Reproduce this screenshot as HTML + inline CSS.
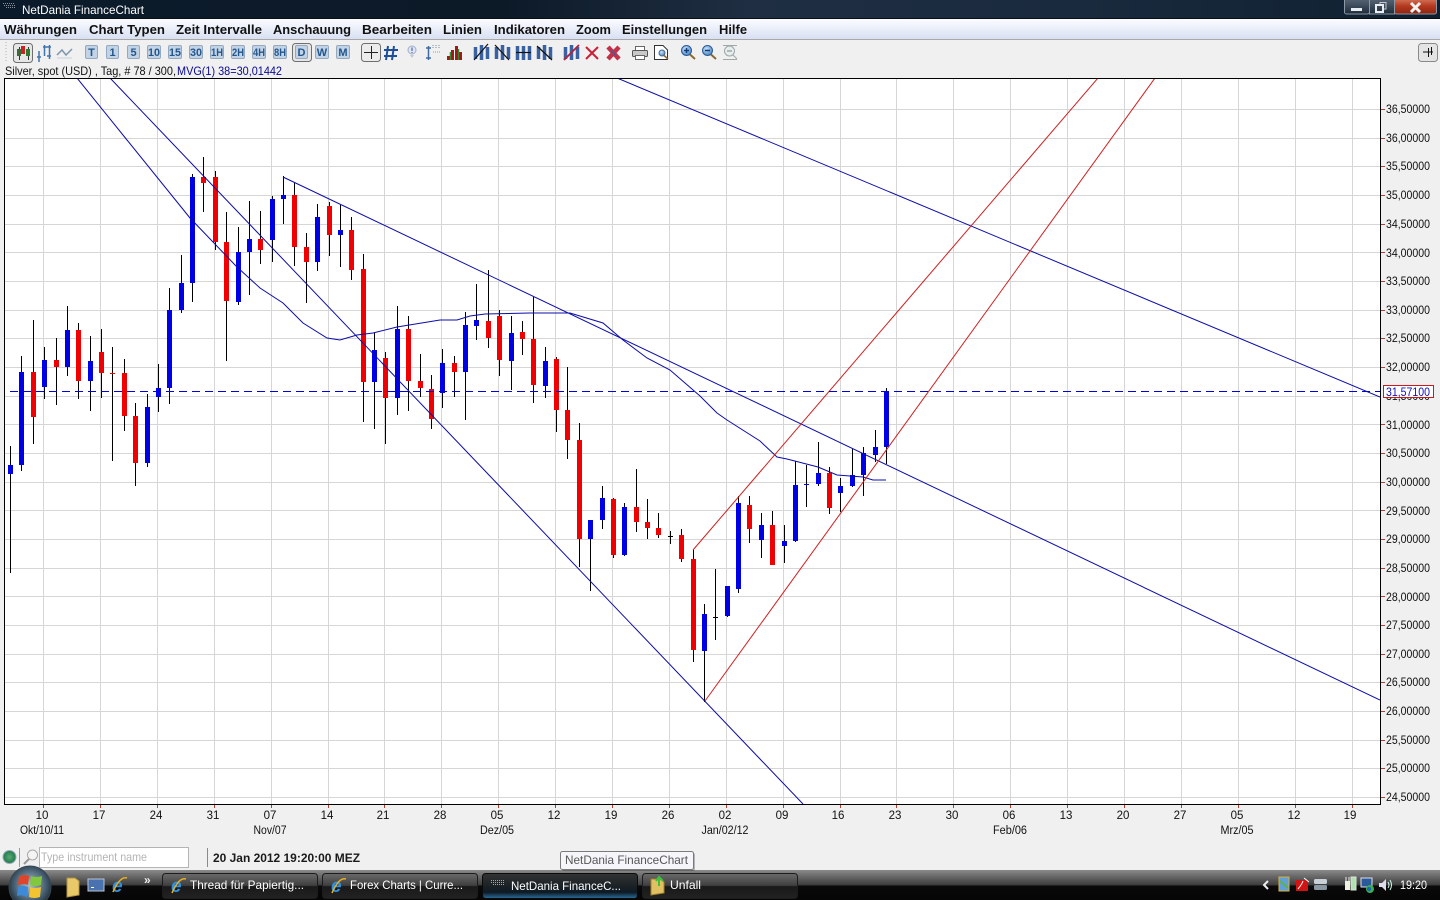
<!DOCTYPE html>
<html lang="de">
<head>
<meta charset="utf-8">
<title>NetDania FinanceChart</title>
<style>
html,body{margin:0;padding:0;width:1440px;height:900px;overflow:hidden;background:#f0f0f0}
svg{display:block;font-family:"Liberation Sans",Arial,sans-serif}
.m{font-size:13px;font-weight:bold;fill:#111}
.y{font-size:12px;fill:#111}
.x{font-size:11.500px;fill:#111;text-anchor:middle}
.b{fill:#c2d3e6;stroke:#94a9c0;stroke-width:1}
.l{font-size:11px;font-weight:bold;fill:#24568c;text-anchor:middle}
.t{font-size:12px;fill:#fff}
.tb{fill:url(#btn);stroke:#1c1c1c;stroke-width:1}
</style>
</head>
<body>
<svg width="1440" height="900" viewBox="0 0 1440 900" xmlns="http://www.w3.org/2000/svg">
<defs>
<linearGradient id="title" x1="0" x2="1" y1="0" y2="0">
<stop offset="0" stop-color="#0b1b2b"/><stop offset=".35" stop-color="#0c1a28"/><stop offset=".52" stop-color="#1f2e42"/><stop offset=".75" stop-color="#1a2a3e"/><stop offset="1" stop-color="#0e2030"/>
</linearGradient>
<linearGradient id="menu" x1="0" x2="0" y1="0" y2="1">
<stop offset="0" stop-color="#fbfcff"/><stop offset="1" stop-color="#d8e0f3"/>
</linearGradient>
<linearGradient id="task" x1="0" x2="0" y1="0" y2="1">
<stop offset="0" stop-color="#8a8a8a"/><stop offset=".5" stop-color="#3c3c3c"/><stop offset=".53" stop-color="#0a0a0a"/><stop offset="1" stop-color="#050505"/>
</linearGradient>
<linearGradient id="btn" x1="0" x2="0" y1="0" y2="1">
<stop offset="0" stop-color="#6a6a6a"/><stop offset=".48" stop-color="#3f3f3f"/><stop offset=".52" stop-color="#191919"/><stop offset="1" stop-color="#222"/>
</linearGradient>
<linearGradient id="act" x1="0" x2="0" y1="0" y2="1">
<stop offset="0" stop-color="#333"/><stop offset=".5" stop-color="#1b2226"/><stop offset=".75" stop-color="#0d1a24"/><stop offset="1" stop-color="#2b6e9c"/>
</linearGradient>
<linearGradient id="wb" x1="0" x2="0" y1="0" y2="1">
<stop offset="0" stop-color="#5a6878"/><stop offset="1" stop-color="#1e2c3a"/>
</linearGradient>
<linearGradient id="wc" x1="0" x2="0" y1="0" y2="1">
<stop offset="0" stop-color="#d87a60"/><stop offset=".5" stop-color="#b53a20"/><stop offset="1" stop-color="#8c2410"/>
</linearGradient>
<radialGradient id="orb" cx=".5" cy=".45" r=".6">
<stop offset="0" stop-color="#a9bfce"/><stop offset=".7" stop-color="#3c5566"/><stop offset="1" stop-color="#141e26"/>
</radialGradient>
<radialGradient id="grn" cx=".5" cy=".5" r=".5">
<stop offset="0" stop-color="#5aa878"/><stop offset="1" stop-color="#1f7a48"/>
</radialGradient>
<radialGradient id="lens" cx=".4" cy=".35" r=".7">
<stop offset="0" stop-color="#cfe4f8"/><stop offset="1" stop-color="#3f7fc0"/>
</radialGradient>
<clipPath id="cc"><rect x="5" y="79" width="1375" height="725"/></clipPath>
</defs>

<!-- title bar -->
<rect x="0" y="0" width="1440" height="18" fill="url(#title)"/>
<rect x="0" y="18" width="1440" height="1" fill="#0a0f14"/>
<path d="M3 3.500H15M4 5.500H15M6 7.500H15" stroke="#8a95a0" stroke-width="1" stroke-dasharray="1 1" fill="none"/>
<text x="22" y="14" class="t" textLength="122" lengthAdjust="spacingAndGlyphs">NetDania FinanceChart</text>
<rect x="1344.500" y="-2" width="25" height="16" rx="2" fill="url(#wb)" stroke="#8d98a4"/>
<rect x="1369.500" y="-2" width="25" height="16" fill="url(#wb)" stroke="#8d98a4"/>
<rect x="1394.500" y="-2" width="42" height="16" rx="2" fill="url(#wc)" stroke="#8d98a4"/>
<rect x="1351" y="8" width="11" height="3" fill="#e8edf2"/>
<rect x="1376" y="5" width="7" height="7" fill="none" stroke="#e8edf2" stroke-width="2"/>
<path d="M1380 4V2.500H1386V9H1384" fill="none" stroke="#c0c8d0" stroke-width="1"/>
<path d="M1411 3L1420 12M1420 3L1411 12" stroke="#f2f2f2" stroke-width="3"/>

<!-- menu bar -->
<rect x="0" y="19" width="1440" height="20" fill="url(#menu)"/>
<rect x="0" y="39" width="1440" height="1" fill="#a8a8a8"/>
<text x="4" y="34" class="m" textLength="73" lengthAdjust="spacingAndGlyphs">Währungen</text>
<text x="89" y="34" class="m" textLength="76" lengthAdjust="spacingAndGlyphs">Chart Typen</text>
<text x="176" y="34" class="m" textLength="86" lengthAdjust="spacingAndGlyphs">Zeit Intervalle</text>
<text x="273" y="34" class="m" textLength="78" lengthAdjust="spacingAndGlyphs">Anschauung</text>
<text x="362" y="34" class="m" textLength="70" lengthAdjust="spacingAndGlyphs">Bearbeiten</text>
<text x="443" y="34" class="m" textLength="39" lengthAdjust="spacingAndGlyphs">Linien</text>
<text x="494" y="34" class="m" textLength="71" lengthAdjust="spacingAndGlyphs">Indikatoren</text>
<text x="576" y="34" class="m" textLength="35" lengthAdjust="spacingAndGlyphs">Zoom</text>
<text x="622" y="34" class="m" textLength="85" lengthAdjust="spacingAndGlyphs">Einstellungen</text>
<text x="719" y="34" class="m" textLength="28" lengthAdjust="spacingAndGlyphs">Hilfe</text>

<!-- toolbar -->
<path d="M6 42V62" stroke="#b0b0b0" stroke-dasharray="1 2" fill="none"/>
<rect x="13.500" y="43.500" width="19" height="19" rx="3" fill="#e6e6e6" stroke="#6f6f6f"/>
<path d="M19.500 47V60M28.500 47V60" stroke="#333"/>
<rect x="17" y="49" width="4" height="7" fill="#3a6a3a"/><rect x="21" y="46" width="4" height="8" fill="#c22"/><rect x="26" y="49" width="4" height="7" fill="#2c7a2c"/>
<path d="M37 57H41M39 51V62M43 47H51M44.500 45V56M49.500 45V59M51 56H47" stroke="#3f74ae" stroke-width="1.500" fill="none"/>
<path d="M57 55L62 50L66 55L72 49" stroke="#7c96b0" stroke-width="1.500" fill="none"/>
<path d="M57 58H72" stroke="#c8d2dc"/>

<g>
<rect class="b" x="85.500" y="45.500" width="12" height="13" rx="1.500"/><text class="l" x="91.500" y="56">T</text>
<rect class="b" x="106.500" y="45.500" width="12" height="13" rx="1.500"/><text class="l" x="112.500" y="56">1</text>
<rect class="b" x="127.500" y="45.500" width="12" height="13" rx="1.500"/><text class="l" x="133.500" y="56">5</text>
<rect class="b" x="147.500" y="45.500" width="13" height="13" rx="1.500"/><text class="l" x="154" y="56" textLength="12" lengthAdjust="spacingAndGlyphs">10</text>
<rect class="b" x="168.500" y="45.500" width="13" height="13" rx="1.500"/><text class="l" x="175" y="56" textLength="12" lengthAdjust="spacingAndGlyphs">15</text>
<rect class="b" x="189.500" y="45.500" width="13" height="13" rx="1.500"/><text class="l" x="196" y="56" textLength="12" lengthAdjust="spacingAndGlyphs">30</text>
<rect class="b" x="210.500" y="45.500" width="13" height="13" rx="1.500"/><text class="l" x="217" y="56" textLength="12" lengthAdjust="spacingAndGlyphs">1H</text>
<rect class="b" x="231.500" y="45.500" width="13" height="13" rx="1.500"/><text class="l" x="238" y="56" textLength="12" lengthAdjust="spacingAndGlyphs">2H</text>
<rect class="b" x="252.500" y="45.500" width="13" height="13" rx="1.500"/><text class="l" x="259" y="56" textLength="12" lengthAdjust="spacingAndGlyphs">4H</text>
<rect class="b" x="273.500" y="45.500" width="13" height="13" rx="1.500"/><text class="l" x="280" y="56" textLength="12" lengthAdjust="spacingAndGlyphs">8H</text>
<rect x="292.500" y="43.500" width="19" height="18" rx="3" fill="#e6e6e6" stroke="#6f6f6f"/>
<rect class="b" x="295.500" y="45.500" width="12" height="13" rx="1.500"/><text class="l" x="301.500" y="56">D</text>
<rect class="b" x="315.500" y="45.500" width="13" height="13" rx="1.500"/><text class="l" x="322" y="56">W</text>
<rect class="b" x="336.500" y="45.500" width="13" height="13" rx="1.500"/><text class="l" x="343" y="56">M</text>
</g>

<rect x="361.500" y="43.500" width="19" height="18" rx="3" fill="#ececec" stroke="#6f6f6f"/>
<path d="M364 52.500H378M371.500 46V59" stroke="#222"/>
<path d="M388 46L386 60M394 46L392 60M384 50H398M384 56H397" stroke="#1d4f99" stroke-width="2" fill="none"/>
<circle cx="412" cy="50" r="4" fill="#dfe6f2" stroke="#a0aec8"/><path d="M412 47.500V51M412 52V53" stroke="#2f4fa0"/><path d="M410 55L412 58L414 55" fill="#c0c8d8"/>
<path d="M428.500 46V60M426 58H431M426 48H431" stroke="#3f6aa0" stroke-width="1.500" fill="none"/>
<path d="M433 45V49M436 45V49M439 45V49" stroke="#7a8a9a" stroke-dasharray="1 1"/><path d="M433 52H441" stroke="#8ea0b4" stroke-dasharray="1 1"/>
<path d="M448.500 56V60M452.500 50V60M456.500 46V60M460.500 52V60" stroke="#a01818" stroke-width="3" fill="none"/>
<path d="M450.500 52V60M458.500 49V60" stroke="#2f8a2f" stroke-width="1.500" fill="none"/>

<g fill="none">
<path d="M475.500 47V59M481.500 45V60M487.500 47V59" stroke="#3a62a0" stroke-width="3.500"/><path d="M474 60L488 44" stroke="#111" stroke-width="1.200"/>
<path d="M496.500 47V59M502.500 45V60M508.500 47V59" stroke="#3a62a0" stroke-width="3.500"/><path d="M495 45L509 60" stroke="#111" stroke-width="1.200"/>
<path d="M517.500 46V60M523.500 46V60M529.500 46V60" stroke="#3a62a0" stroke-width="3.500"/><path d="M516 52.500H531" stroke="#111" stroke-width="1.200"/>
<path d="M538.500 47V59M544.500 45V60M550.500 47V59" stroke="#3a62a0" stroke-width="3.500"/><path d="M537 46L552 60" stroke="#111" stroke-width="1.200"/>
<path d="M565.500 47V59M571.500 45V60M577.500 47V59" stroke="#3a62a0" stroke-width="3.500"/><path d="M564 60L579 45" stroke="#b02040" stroke-width="1.800"/>
<path d="M586 47L598 59M598 47L586 59" stroke="#cc2038" stroke-width="2"/>
<path d="M608 47L619 59M619 47L608 59" stroke="#c43048" stroke-width="4.500"/><path d="M611 50L616 56" stroke="#4060a0" stroke-width="1.500"/>
</g>

<rect x="635.500" y="46.500" width="9" height="4" fill="#fff" stroke="#666"/>
<rect x="632.500" y="50.500" width="15" height="6" rx="1" fill="#c8c8c8" stroke="#555"/>
<rect x="635.500" y="55.500" width="9" height="4" fill="#fff" stroke="#666"/>
<path d="M654.500 45.500H663L667.500 50V59.500H654.500Z" fill="#fff" stroke="#333"/>
<circle cx="662" cy="53" r="3" fill="url(#lens)" stroke="#4a6a90"/><path d="M664 55.500L668 59" stroke="#8a6a30" stroke-width="1.500"/>

<circle cx="686.500" cy="50.500" r="5" fill="url(#lens)" stroke="#2a5c9a"/><path d="M684 50.500H689M686.500 48V53" stroke="#123a78" stroke-width="1.500"/><path d="M690 54.500L695 59" stroke="#8a6a30" stroke-width="2"/>
<circle cx="707.500" cy="50.500" r="5" fill="url(#lens)" stroke="#2a5c9a"/><path d="M705 50.500H710" stroke="#123a78" stroke-width="1.500"/><path d="M711 54.500L716 59" stroke="#8a6a30" stroke-width="2"/>
<circle cx="729.500" cy="51" r="5" fill="#e8ecec" stroke="#9aa8a8"/><path d="M727 51H732" stroke="#9aa8a8" stroke-width="1.500"/><path d="M723 45.500H737M723 59.500H737M733 55L737 59" stroke="#a0a8a8"/>

<rect x="1418.500" y="43.500" width="19" height="18" rx="3" fill="#e4e4e4" stroke="#8a8a8a"/>
<path d="M1423 52H1433M1428.500 48V57M1431.500 47V55" stroke="#111"/>

<text x="5" y="75" font-size="12" fill="#111" textLength="171" lengthAdjust="spacingAndGlyphs">Silver, spot (USD) , Tag, # 78 / 300,</text>
<text x="177" y="75" font-size="12" fill="#0a0a90" textLength="105" lengthAdjust="spacingAndGlyphs">MVG(1) 38=30,01442</text>

<!-- chart -->
<rect x="4.500" y="78.500" width="1376" height="726" fill="#fff" stroke="#000"/>
<g clip-path="url(#cc)">
<path fill="none" stroke="#d6d6d6" d="M5 109.500H1380M5 138.500H1380M5 166.500H1380M5 195.500H1380M5 224.500H1380M5 252.500H1380M5 281.500H1380M5 310.500H1380M5 338.500H1380M5 367.500H1380M5 396.500H1380M5 424.500H1380M5 453.500H1380M5 482.500H1380M5 510.500H1380M5 539.500H1380M5 568.500H1380M5 596.500H1380M5 625.500H1380M5 654.500H1380M5 682.500H1380M5 711.500H1380M5 740.500H1380M5 768.500H1380M5 797.500H1380"/>
<path fill="none" stroke="#d6d6d6" d="M43.500 79V804M100.500 79V804M157.500 79V804M214.500 79V804M271.500 79V804M328.500 79V804M384.500 79V804M441.500 79V804M498.500 79V804M555.500 79V804M612.500 79V804M669.500 79V804M726.500 79V804M783.500 79V804M840.500 79V804M896.500 79V804M953.500 79V804M1010.500 79V804M1067.500 79V804M1124.500 79V804M1181.500 79V804M1238.500 79V804M1295.500 79V804M1352.500 79V804"/>

<!-- wicks -->
<path fill="none" stroke="#000" d="M10.500 446V573M21.500 356V471M33.500 320V444M44.500 347V399M56.500 338V405M67.500 306V376M78.500 323V399M90.500 336V411M101.500 329V398M112.500 347V461M124.500 359V431M135.500 403V486M147.500 394V467M158.500 364V412M169.500 288V404M181.500 255V313M192.500 174V302M203.500 157V212M215.500 171V250M226.500 212V361M238.500 227V305M249.500 201V295M260.500 211V264M272.500 196V262M283.500 176V224M294.500 183V266M306.500 233V303M317.500 204V271M329.500 202V256M340.500 205V267M351.500 217V280M363.500 254V422M374.500 333V429M385.500 352V444M397.500 306V415M408.500 316V411M420.500 354V397M431.500 375V429M442.500 349V408M454.500 356V397M465.500 312V420M476.500 284V340M488.500 270V348M499.500 310V376M511.500 316V390M522.500 321V355M533.500 297V403M545.500 347V398M556.500 357V432M567.500 367V459M579.500 423V567M590.500 520V591M602.500 486V529M613.500 498V558M624.500 503V556M636.500 469V532M647.500 499V539M658.500 513V538M670.500 531V544M681.500 529V562M693.500 550V662M704.500 604V702M715.500 569V640M727.500 586V617M738.500 496V593M749.500 496V543M761.500 513V558M772.500 511V565M784.500 525V563M795.500 461V542M806.500 465V507M818.500 442V486M829.500 467V514M840.500 478V512M852.500 449V487M863.500 447V496M875.500 430V462M886.500 388V464M668 536.500H673M713 617.500H718"/>
<!-- blue bodies -->
<path fill="none" stroke="#0000e6" stroke-width="5" d="M10.500 465V474M21.500 372V465M44.500 360V387M67.500 330V367M90.500 361V381M147.500 407V463M158.500 388V397M169.500 310V388M181.500 283V310M192.500 177V283M238.500 252V302M249.500 239V252M272.500 199V240M283.500 195V199M317.500 217V262M340.500 230V235M374.500 350V382M397.500 329V398M442.500 363V393M465.500 325V372M476.500 320V326M511.500 333V361M545.500 361V386M590.500 520V539M602.500 498V520M624.500 507V555M704.500 614V651M727.500 586V616M738.500 503V589M761.500 525V540M784.500 541V546M795.500 485V541M818.500 473V484M840.500 486V493M852.500 475V486M863.500 453V475M875.500 447V455M886.500 391V447"/>
<path fill="none" stroke="#0000e6" d="M804 484.500H809"/>
<!-- red bodies -->
<path fill="none" stroke="#f00000" stroke-width="5" d="M33.500 372V417M56.500 360V367M78.500 330V381M101.500 352V373M124.500 373V416M135.500 416V463M203.500 177V183M215.500 177V242M226.500 242V301M260.500 239V250M294.500 195V247M306.500 247V262M329.500 206V235M351.500 230V270M363.500 269V382M385.500 358V398M408.500 329V381M420.500 381V388M431.500 389V419M454.500 363V372M488.500 321V338M499.500 316V360M522.500 332V339M533.500 339V385M556.500 359V410M567.500 410V440M579.500 440V539M613.500 499V555M636.500 507V522M647.500 522V528M658.500 528V535M681.500 535V559M693.500 559V650M749.500 505V529M772.500 525V565M829.500 473V508"/>
<path fill="none" stroke="#f00000" d="M110 373.500H115"/>

<!-- overlay lines -->
<path fill="none" stroke="#0c0ca8" d="M617 78L1380 397M283 177L1380 700M110 78L803 804"/>
<path fill="none" stroke="#0c0ca8" d="M77 78L127 140L190 218L236 266L260 288L283 303L303 323L327 338L340 340L357 335L373 333L397 327L440 320L457 320L470 316L485 314L530 313L570 313L603 323L623 340L647 358L670 370L700 396L717 413L727 420L760 441L777 457L787 459L818 467L837 475L863 477L873 480L886 480"/>
<path fill="none" stroke="#d02020" d="M693 550L1098 78M705 701L1155 78"/>
<path fill="none" stroke="#0000d8" stroke-dasharray="8 5" d="M10 391.500H1380"/>
</g>

<!-- axis ticks -->
<path fill="none" stroke="#b04030" d="M1381 109.500H1385M1381 138.500H1385M1381 166.500H1385M1381 195.500H1385M1381 224.500H1385M1381 252.500H1385M1381 281.500H1385M1381 310.500H1385M1381 338.500H1385M1381 367.500H1385M1381 424.500H1385M1381 453.500H1385M1381 482.500H1385M1381 510.500H1385M1381 539.500H1385M1381 568.500H1385M1381 596.500H1385M1381 625.500H1385M1381 654.500H1385M1381 682.500H1385M1381 711.500H1385M1381 740.500H1385M1381 768.500H1385M1381 797.500H1385"/>
<path fill="none" stroke="#b04030" d="M43.500 805V808M100.500 805V808M157.500 805V808M214.500 805V808M271.500 805V808M328.500 805V808M384.500 805V808M441.500 805V808M498.500 805V808M555.500 805V808M612.500 805V808M669.500 805V808M726.500 805V808M783.500 805V808M840.500 805V808M896.500 805V808M953.500 805V808M1010.500 805V808M1067.500 805V808M1124.500 805V808M1181.500 805V808M1238.500 805V808M1295.500 805V808M1352.500 805V808"/>

<!-- y labels -->
<text class="y" x="1386" y="113" textLength="44" lengthAdjust="spacingAndGlyphs">36,50000</text>
<text class="y" x="1386" y="142" textLength="44" lengthAdjust="spacingAndGlyphs">36,00000</text>
<text class="y" x="1386" y="170" textLength="44" lengthAdjust="spacingAndGlyphs">35,50000</text>
<text class="y" x="1386" y="199" textLength="44" lengthAdjust="spacingAndGlyphs">35,00000</text>
<text class="y" x="1386" y="228" textLength="44" lengthAdjust="spacingAndGlyphs">34,50000</text>
<text class="y" x="1386" y="257" textLength="44" lengthAdjust="spacingAndGlyphs">34,00000</text>
<text class="y" x="1386" y="285" textLength="44" lengthAdjust="spacingAndGlyphs">33,50000</text>
<text class="y" x="1386" y="314" textLength="44" lengthAdjust="spacingAndGlyphs">33,00000</text>
<text class="y" x="1386" y="342" textLength="44" lengthAdjust="spacingAndGlyphs">32,50000</text>
<text class="y" x="1386" y="371" textLength="44" lengthAdjust="spacingAndGlyphs">32,00000</text>
<text class="y" x="1386" y="400" textLength="44" lengthAdjust="spacingAndGlyphs">31,50000</text>
<text class="y" x="1386" y="429" textLength="44" lengthAdjust="spacingAndGlyphs">31,00000</text>
<text class="y" x="1386" y="457" textLength="44" lengthAdjust="spacingAndGlyphs">30,50000</text>
<text class="y" x="1386" y="486" textLength="44" lengthAdjust="spacingAndGlyphs">30,00000</text>
<text class="y" x="1386" y="515" textLength="44" lengthAdjust="spacingAndGlyphs">29,50000</text>
<text class="y" x="1386" y="543" textLength="44" lengthAdjust="spacingAndGlyphs">29,00000</text>
<text class="y" x="1386" y="572" textLength="44" lengthAdjust="spacingAndGlyphs">28,50000</text>
<text class="y" x="1386" y="601" textLength="44" lengthAdjust="spacingAndGlyphs">28,00000</text>
<text class="y" x="1386" y="629" textLength="44" lengthAdjust="spacingAndGlyphs">27,50000</text>
<text class="y" x="1386" y="658" textLength="44" lengthAdjust="spacingAndGlyphs">27,00000</text>
<text class="y" x="1386" y="686" textLength="44" lengthAdjust="spacingAndGlyphs">26,50000</text>
<text class="y" x="1386" y="715" textLength="44" lengthAdjust="spacingAndGlyphs">26,00000</text>
<text class="y" x="1386" y="744" textLength="44" lengthAdjust="spacingAndGlyphs">25,50000</text>
<text class="y" x="1386" y="772" textLength="44" lengthAdjust="spacingAndGlyphs">25,00000</text>
<text class="y" x="1386" y="801" textLength="44" lengthAdjust="spacingAndGlyphs">24,50000</text>
<rect x="1383.500" y="385.500" width="50" height="12" fill="#fff" stroke="#d01818"/>
<text x="1386" y="396" font-size="12" fill="#1010c0" textLength="44" lengthAdjust="spacingAndGlyphs">31,57100</text>

<!-- x labels -->
<text class="x" x="42" y="819">10</text><text class="x" x="99" y="819">17</text><text class="x" x="156" y="819">24</text><text class="x" x="213" y="819">31</text><text class="x" x="270" y="819">07</text><text class="x" x="327" y="819">14</text><text class="x" x="383" y="819">21</text><text class="x" x="440" y="819">28</text><text class="x" x="497" y="819">05</text><text class="x" x="554" y="819">12</text><text class="x" x="611" y="819">19</text><text class="x" x="668" y="819">26</text><text class="x" x="725" y="819">02</text><text class="x" x="782" y="819">09</text><text class="x" x="838" y="819">16</text><text class="x" x="895" y="819">23</text><text class="x" x="952" y="819">30</text><text class="x" x="1009" y="819">06</text><text class="x" x="1066" y="819">13</text><text class="x" x="1123" y="819">20</text><text class="x" x="1180" y="819">27</text><text class="x" x="1237" y="819">05</text><text class="x" x="1294" y="819">12</text><text class="x" x="1350" y="819">19</text>
<text class="x" x="42" y="834" textLength="44" lengthAdjust="spacingAndGlyphs">Okt/10/11</text><text class="x" x="270" y="834" textLength="33" lengthAdjust="spacingAndGlyphs">Nov/07</text><text class="x" x="497" y="834" textLength="34" lengthAdjust="spacingAndGlyphs">Dez/05</text><text class="x" x="725" y="834" textLength="47" lengthAdjust="spacingAndGlyphs">Jan/02/12</text><text class="x" x="1010" y="834" textLength="34" lengthAdjust="spacingAndGlyphs">Feb/06</text><text class="x" x="1237" y="834" textLength="33" lengthAdjust="spacingAndGlyphs">Mrz/05</text>

<!-- status row -->
<circle cx="9.500" cy="857" r="6.500" fill="url(#grn)" stroke="#9ab"/>
<path d="M19.500 848V867" stroke="#9a9a9a"/>
<circle cx="32.500" cy="855" r="5" fill="#f4f4f4" stroke="#a8a8a8"/><path d="M29 859L24 864" stroke="#9a9a9a" stroke-width="2"/>
<rect x="39.500" y="847.500" width="149" height="20" fill="#fff" stroke="#b4b4b4"/>
<text x="41" y="861" font-size="12" fill="#b4b4b4" textLength="106" lengthAdjust="spacingAndGlyphs">Type instrument name</text>
<path d="M207.500 848V867" stroke="#8a8a8a"/>
<text x="213" y="862" font-size="12" font-weight="bold" fill="#1a1a1a" textLength="147" lengthAdjust="spacingAndGlyphs">20 Jan 2012 19:20:00 MEZ</text>

<!-- taskbar -->
<rect x="0" y="870" width="1440" height="30" fill="url(#task)"/>
<rect x="162.500" y="873.500" width="155" height="25" rx="3" class="tb"/>
<rect x="322.500" y="873.500" width="155" height="25" rx="3" class="tb"/>
<rect x="482.500" y="873.500" width="155" height="25" rx="3" fill="url(#act)" stroke="#0a0a0a"/>
<rect x="642.500" y="873.500" width="155" height="25" rx="3" class="tb"/>

<circle cx="30" cy="887" r="21" fill="url(#orb)" stroke="#3a4650"/>
<path d="M19 876Q25 874 29 876L28 885Q24 883 18 885Z" fill="#e0452c"/>
<path d="M31 876Q36 878 42 876L41 885Q35 887 30 885Z" fill="#82c83c"/>
<path d="M18 887Q24 885 28 887L27 897Q22 894 17 896Z" fill="#3c8ad8"/>
<path d="M30 887Q35 889 41 887L40 897Q34 899 29 897Z" fill="#f4c430"/>

<path d="M67 878H75L79 881V895L67 897Z" fill="#e8c868" stroke="#b09040"/>
<rect x="88" y="879" width="16" height="12" fill="#4a72b0" stroke="#b8c4d0"/><rect x="91" y="887" width="3" height="1" fill="#fff"/>
<text x="112" y="892" font-size="19" font-style="italic" font-weight="bold" fill="#2f8fe0">e</text>
<path d="M113 892Q120 876 127 878" fill="none" stroke="#e8b020" stroke-width="1.500"/>
<text x="144" y="884" font-size="12" font-weight="bold" fill="#eee">»</text>

<text x="171" y="892" font-size="19" font-style="italic" font-weight="bold" fill="#2f8fe0">e</text>
<path d="M172 893Q179 877 186 879" fill="none" stroke="#e8b020" stroke-width="1.500"/>
<text x="190" y="889" class="t" textLength="114" lengthAdjust="spacingAndGlyphs">Thread für Papiertig...</text>
<text x="331" y="892" font-size="19" font-style="italic" font-weight="bold" fill="#2f8fe0">e</text>
<path d="M332 893Q339 877 346 879" fill="none" stroke="#e8b020" stroke-width="1.500"/>
<text x="350" y="889" class="t" textLength="113" lengthAdjust="spacingAndGlyphs">Forex Charts | Curre...</text>
<path d="M491 880.500H505M491 882.500H505M493 884.500H505" stroke="#a0a8b0" stroke-dasharray="1 1"/>
<text x="511" y="890" class="t" textLength="110" lengthAdjust="spacingAndGlyphs">NetDania FinanceC...</text>
<path d="M651 879H660L664 882V893L651 895Z" fill="#e0c060" stroke="#a08030"/><path d="M659 886V878M656 881L659 877L663 881" stroke="#40c040" stroke-width="2" fill="none"/>
<text x="670" y="889" class="t" textLength="31" lengthAdjust="spacingAndGlyphs">Unfall</text>

<!-- tray -->
<path d="M1268 881L1264 885L1268 889" fill="none" stroke="#eee" stroke-width="2"/>
<rect x="1279" y="877" width="10" height="14" fill="#60a0d8" stroke="#d8b040"/><path d="M1280 881L1288 888" stroke="#60b050" stroke-width="2"/>
<rect x="1296" y="880" width="12" height="11" fill="#d01414"/><path d="M1298 889Q1302 884 1303 881M1304 878L1309 882" stroke="#fff" fill="none"/>
<rect x="1314" y="879" width="13" height="5" rx="1.500" fill="#c8d0d8"/><rect x="1314" y="885" width="13" height="5" rx="1.500" fill="#8a98a4"/>
<rect x="1345" y="881" width="5" height="9" fill="#f0f0e0"/><path d="M1346 877V881M1349 877V881" stroke="#eee"/><rect x="1351" y="877" width="5" height="13" fill="#b0e0b0" stroke="#e0e0e0"/>
<rect x="1361" y="878" width="11" height="9" fill="#2a5a9a" stroke="#dde"/><circle cx="1370" cy="889" r="4" fill="#3ab04a"/><circle cx="1369" cy="889" r="2" fill="#2060c0"/>
<path d="M1379 883H1382L1386 879V891L1382 887H1379Z" fill="#dde"/><path d="M1388 882Q1390 885 1388 888M1390 880Q1393 885 1390 890" fill="none" stroke="#cfe"/>
<text x="1400" y="889" class="t" textLength="27" lengthAdjust="spacingAndGlyphs">19:20</text>

<!-- tooltip -->
<rect x="562" y="853" width="133" height="18" rx="2" fill="#000" opacity=".25"/>
<rect x="560.500" y="851.500" width="133" height="18" rx="2" fill="#f5f5fa" stroke="#7a7a7a"/>
<text x="565" y="864" font-size="12" fill="#575757" textLength="123" lengthAdjust="spacingAndGlyphs">NetDania FinanceChart</text>
</svg>
</body>
</html>
